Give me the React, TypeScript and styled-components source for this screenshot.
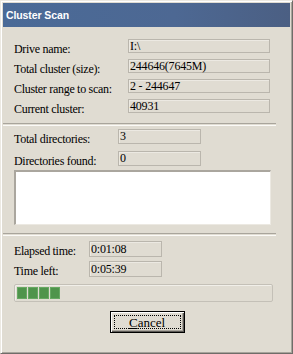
import React from "react";
import styled, { createGlobalStyle } from "styled-components";

const Global = createGlobalStyle`
  html, body { margin: 0; padding: 0; background: #e0dcd2; }
  body { width: 293px; height: 354px; overflow: hidden; }
`;

const Window = styled.div`
  box-sizing: border-box;
  width: 293px;
  height: 354px;
  background: #e0dcd2;
  border-top: 1px solid #ece9e2;
  border-left: 1px solid #ece9e2;
  border-right: 1px solid #6f6d69;
  border-bottom: 1px solid #6f6d69;
  box-shadow: inset 1px 1px 0 #ffffff, inset -1px -1px 0 #a8a49c;
  padding: 2px 2px 2px 2px;
  display: flex;
  flex-direction: column;
  font-family: "Liberation Serif", "Times New Roman", serif;
  font-size: 12px;
  color: #000;
`;

const TitleBar = styled.div`
  height: 24px;
  flex: none;
  background: linear-gradient(90deg, #4a6a97 0%, #4d6893 60%, #4b5f83 100%);
  color: #fff;
  font-family: "Liberation Sans", Arial, sans-serif;
  font-weight: bold;
  font-size: 10.5px;
  display: flex;
  align-items: center;
  padding-left: 3px;
  letter-spacing: -0.1px;
`;

const Body = styled.div`
  padding: 12px 14px 0 11px;
  display: flex;
  flex-direction: column;
`;

const Grid = styled.div<{ $labelW: number; $fieldW: number; $gap: number }>`
  display: grid;
  grid-template-columns: ${(p) => p.$labelW}px ${(p) => p.$fieldW}px;
  row-gap: ${(p) => p.$gap}px;
`;

const Label = styled.div`
  height: 14px;
  line-height: 14px;
  padding-top: 3px;
  box-sizing: border-box;
  white-space: nowrap;
  letter-spacing: -0.3px;
`;

const Field = styled.div<{ $h: number }>`
  box-sizing: border-box;
  height: ${(p) => p.$h}px;
  border: 1px solid #bab6ad;
  box-shadow: inset 1px 1px 0 #ece9e2;
  padding-left: 1px;
  line-height: ${(p) => p.$h - 2}px;
  white-space: nowrap;
  letter-spacing: -0.2px;
`;

const Separator = styled.div<{ $mt: number; $mb: number }>`
  margin: ${(p) => p.$mt}px 0 ${(p) => p.$mb}px -11px;
  height: 1px;
  border-top: 1px solid #a9a59c;
  border-bottom: 1px solid #fbfaf7;
`;

const ListBox = styled.div`
  box-sizing: border-box;
  margin-top: 4px;
  width: 257px;
  height: 55px;
  background: #fff;
  border-top: 2px solid #aaa69e;
  border-left: 2px solid #aaa69e;
  border-right: 1px solid #ece9e2;
  border-bottom: 1px solid #ece9e2;
`;

const Progress = styled.div`
  box-sizing: border-box;
  margin-top: 7px;
  width: 259px;
  height: 18px;
  border: 1px solid #c4c0b7;
  border-radius: 2px;
  box-shadow: inset 1px 1px 0 #f1efe9;
  display: flex;
  gap: 1px;
  padding: 2px 2px;
`;

const Block = styled.div`
  width: 10px;
  height: 100%;
  background: #4f944b;
  box-shadow: inset 0 0 0 1px #66a862;
`;

const ButtonRow = styled.div`
  display: flex;
  justify-content: center;
  margin-top: 9px;
  margin-left: 1px;
`;

const Button = styled.div`
  box-sizing: border-box;
  width: 75px;
  height: 22px;
  border: 1px solid #000;
  background: #e0dcd2;
  box-shadow: inset 1px 1px 0 #ffffff, inset -1px -1px 0 #5c5a56, inset -2px -2px 0 #a8a49c;
  padding: 3px;
  display: flex;
`;

const Focus = styled.div`
  flex: 1;
  border: 1px dotted #000;
  display: flex;
  align-items: center;
  justify-content: center;
  font-size: 13px;
  line-height: 13px;
  u { text-decoration: underline; text-underline-offset: 1px; }
`;

export default function App() {
  const rows1 = [
    ["Drive name:", "I:\\"],
    ["Total cluster (size):", "244646(7645M)"],
    ["Cluster range to scan:", "2 - 244647"],
    ["Current cluster:", "40931"],
  ];
  const rows2 = [
    ["Total directories:", "3"],
    ["Directories found:", "0"],
  ];
  const rows3 = [
    ["Elapsed time:", "0:01:08"],
    ["Time left:", "0:05:39"],
  ];
  return (
    <>
      <Global />
      <Window>
        <TitleBar>Cluster Scan</TitleBar>
        <Body>
          <Grid $labelW={114} $fieldW={142} $gap={6}>
            {rows1.map(([l, v]) => (
              <React.Fragment key={l}>
                <Label>{l}</Label>
                <Field $h={14}>{v}</Field>
              </React.Fragment>
            ))}
          </Grid>
          <Separator $mt={10} $mb={3} />
          <Grid $labelW={104} $fieldW={83} $gap={7}>
            {rows2.map(([l, v]) => (
              <React.Fragment key={l}>
                <Label>{l}</Label>
                <Field $h={15}>{v}</Field>
              </React.Fragment>
            ))}
          </Grid>
          <ListBox />
          <Separator $mt={8} $mb={5} />
          <Grid $labelW={75} $fieldW={73} $gap={4}>
            {rows3.map(([l, v]) => (
              <React.Fragment key={l}>
                <Label>{l}</Label>
                <Field $h={16}>{v}</Field>
              </React.Fragment>
            ))}
          </Grid>
          <Progress>
            <Block />
            <Block />
            <Block />
            <Block />
          </Progress>
        </Body>
        <ButtonRow>
          <Button>
            <Focus>
              <span>
                <u>C</u>ancel
              </span>
            </Focus>
          </Button>
        </ButtonRow>
      </Window>
    </>
  );
}
